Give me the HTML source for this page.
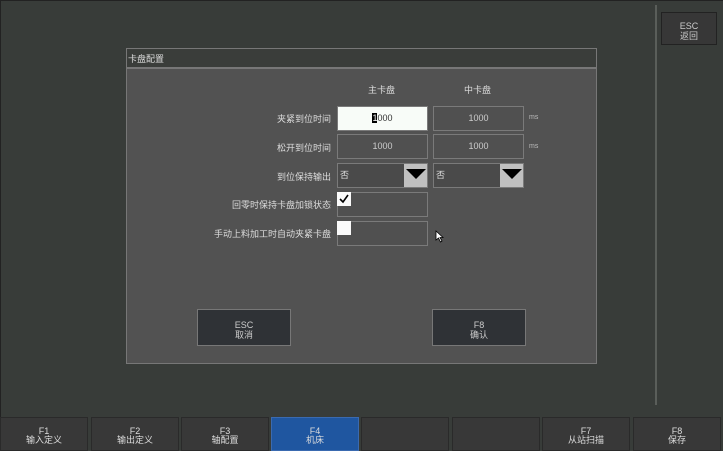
<!DOCTYPE html><html><head><meta charset="utf-8"><style>
*{box-sizing:border-box;margin:0;padding:0}
body{width:723px;height:451px;background:#383c39;position:relative;overflow:hidden;font-family:"Liberation Sans","Noto Sans CJK SC",sans-serif;color:#ddd;font-size:9px}
.a{position:absolute}
.dlg{left:126px;top:48px;width:471px;height:316px;border:1px solid #777;background:#525252}
.tt{left:0;top:0;width:469px;height:20px;background:#3a3d3a;border-bottom:2px solid #777;padding:4px 1px;color:#ddd;font-size:9px}
.lbl{text-align:right;width:200px;color:#ddd}
.f{width:91px;height:25px;border:1px solid #7a7a7a;background:#505050;text-align:center;line-height:23px;color:#ccc}
.dd{width:91px;height:25px;border:1px solid #7a7a7a;background:#4a4a4a;color:#ddd;line-height:23px;padding-left:2px}
.dd i{position:absolute;right:0;top:0;width:23px;height:23px;background:#c0c0c0}
.dd i:after{content:"";position:absolute;left:2px;top:5px;border-left:10px solid transparent;border-right:10px solid transparent;border-top:10px solid #000}
.btn{background:#2f3236;border:1px solid #777;text-align:center;font-size:9px;line-height:10px;color:#ccc;padding-top:10px}
.fk{top:417px;height:34px;width:88px;background:#383838;border:1px solid #2a2a2a;text-align:center;line-height:9px;font-size:9px;color:#ddd;padding-top:9px}
</style></head><body>
<div class="a" style="left:0;top:0;width:723px;height:1px;background:#222"></div>
<div class="a" style="left:0;top:0;width:1px;height:451px;background:#222"></div>
<div class="a" style="left:655px;top:5px;width:2px;height:400px;background:#5a5e5a"></div>
<div class="a btn" style="left:661px;top:12px;width:56px;height:33px;padding-top:8px;background:#373737;border-color:#222">ESC<br>返回</div>
<div class="a dlg">
<div class="a tt" style="padding-top:3px">卡盘配置</div>
</div>
<div class="a" style="left:368px;top:83px;color:#ddd">主卡盘</div>
<div class="a" style="left:464px;top:83px;color:#ddd">中卡盘</div>
<div class="a lbl" style="left:131px;top:112px">夹紧到位时间</div>
<div class="a lbl" style="left:131px;top:141px">松开到位时间</div>
<div class="a lbl" style="left:131px;top:170px">到位保持输出</div>
<div class="a lbl" style="left:131px;top:198px">回零时保持卡盘加锁状态</div>
<div class="a lbl" style="left:131px;top:227px">手动上料加工时自动夹紧卡盘</div>
<div class="a f" style="left:337px;top:106px;background:#f8fcf8;color:#333"><span style="background:#000;color:#fff">1</span>000</div>
<div class="a f" style="left:433px;top:106px">1000</div>
<div class="a" style="left:529px;top:114px;font-size:7px;color:#bbb">ms</div>
<div class="a f" style="left:337px;top:134px">1000</div>
<div class="a f" style="left:433px;top:134px">1000</div>
<div class="a" style="left:529px;top:143px;font-size:7px;color:#bbb">ms</div>
<div class="a dd" style="left:337px;top:163px">否<i></i></div>
<div class="a dd" style="left:433px;top:163px">否<i></i></div>
<div class="a f" style="left:337px;top:192px"></div>
<div class="a" style="left:337px;top:192px;width:14px;height:14px;background:#fafafa"><svg width="14" height="14"><path d="M3 7 L6 10 L11 3" stroke="#000" stroke-width="1.6" fill="none"/></svg></div>
<div class="a f" style="left:337px;top:221px"></div>
<div class="a" style="left:337px;top:221px;width:14px;height:14px;background:#fafafa"></div>
<svg class="a" style="left:435px;top:230px" width="9" height="13"><path d="M1 1 L1 10 L3.5 8 L5.5 12 L7 11 L5 7.5 L8 7.5 Z" fill="#fff" stroke="#000" stroke-width="0.8"/></svg>
<div class="a btn" style="left:197px;top:309px;width:94px;height:37px">ESC<br>取消</div>
<div class="a btn" style="left:432px;top:309px;width:94px;height:37px">F8<br>确认</div>
<div class="a fk" style="left:0">F1<br>输入定义</div>
<div class="a fk" style="left:91px">F2<br>输出定义</div>
<div class="a fk" style="left:181px">F3<br>轴配置</div>
<div class="a fk" style="left:271px;background:#1f56a0;border-color:#3a6ab0">F4<br>机床</div>
<div class="a fk" style="left:361px"></div>
<div class="a fk" style="left:452px"></div>
<div class="a fk" style="left:542px">F7<br>从站扫描</div>
<div class="a fk" style="left:633px">F8<br>保存</div>
</body></html>
